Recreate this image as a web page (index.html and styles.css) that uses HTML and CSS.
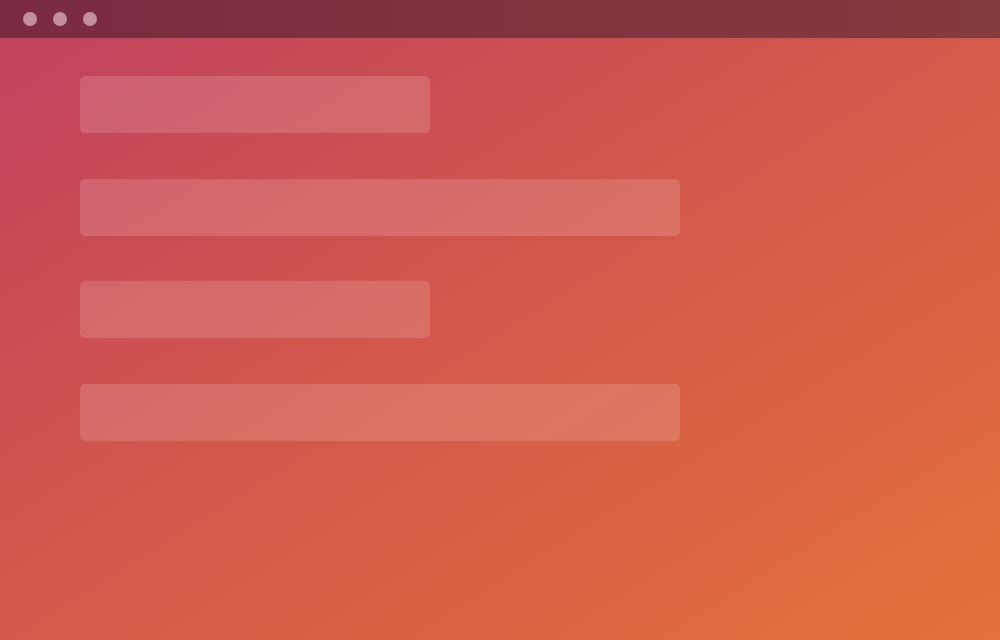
FILE: index.html
```html
<!DOCTYPE html>
<html>
<head>
<meta charset="utf-8">
<link rel="stylesheet" href="styles.css">
</head>
<body>
<div class="window">
  <div class="titlebar">
    <span class="dot"></span>
    <span class="dot"></span>
    <span class="dot"></span>
  </div>
  <div class="content">
    <div class="bar short"></div>
    <div class="bar long"></div>
    <div class="bar short"></div>
    <div class="bar long"></div>
  </div>
</div>
</body>
</html>
```
FILE: styles.css
```css
html, body {
  margin: 0;
  padding: 0;
  width: 1000px;
  height: 640px;
  overflow: hidden;
}
.window {
  width: 1000px;
  height: 640px;
  display: flex;
  flex-direction: column;
  background: linear-gradient(148deg, #c0415f 0%, #d2564c 45%, #e3723b 100%);
}
.titlebar {
  height: 38px;
  flex: none;
  display: flex;
  align-items: center;
  gap: 16px;
  padding-left: 23px;
  background: linear-gradient(90deg, #7b2a40 0%, #853a3c 100%);
}
.dot {
  width: 14px;
  height: 14px;
  border-radius: 50%;
  background: #c1909c;
}
.content {
  display: flex;
  flex-direction: column;
  gap: 45.5px;
  padding: 38px 0 0 80px;
}
.bar {
  height: 57px;
  border-radius: 5px;
  background: rgba(255, 255, 255, 0.15);
}
.short { width: 350px; }
.long { width: 600px; }
```
